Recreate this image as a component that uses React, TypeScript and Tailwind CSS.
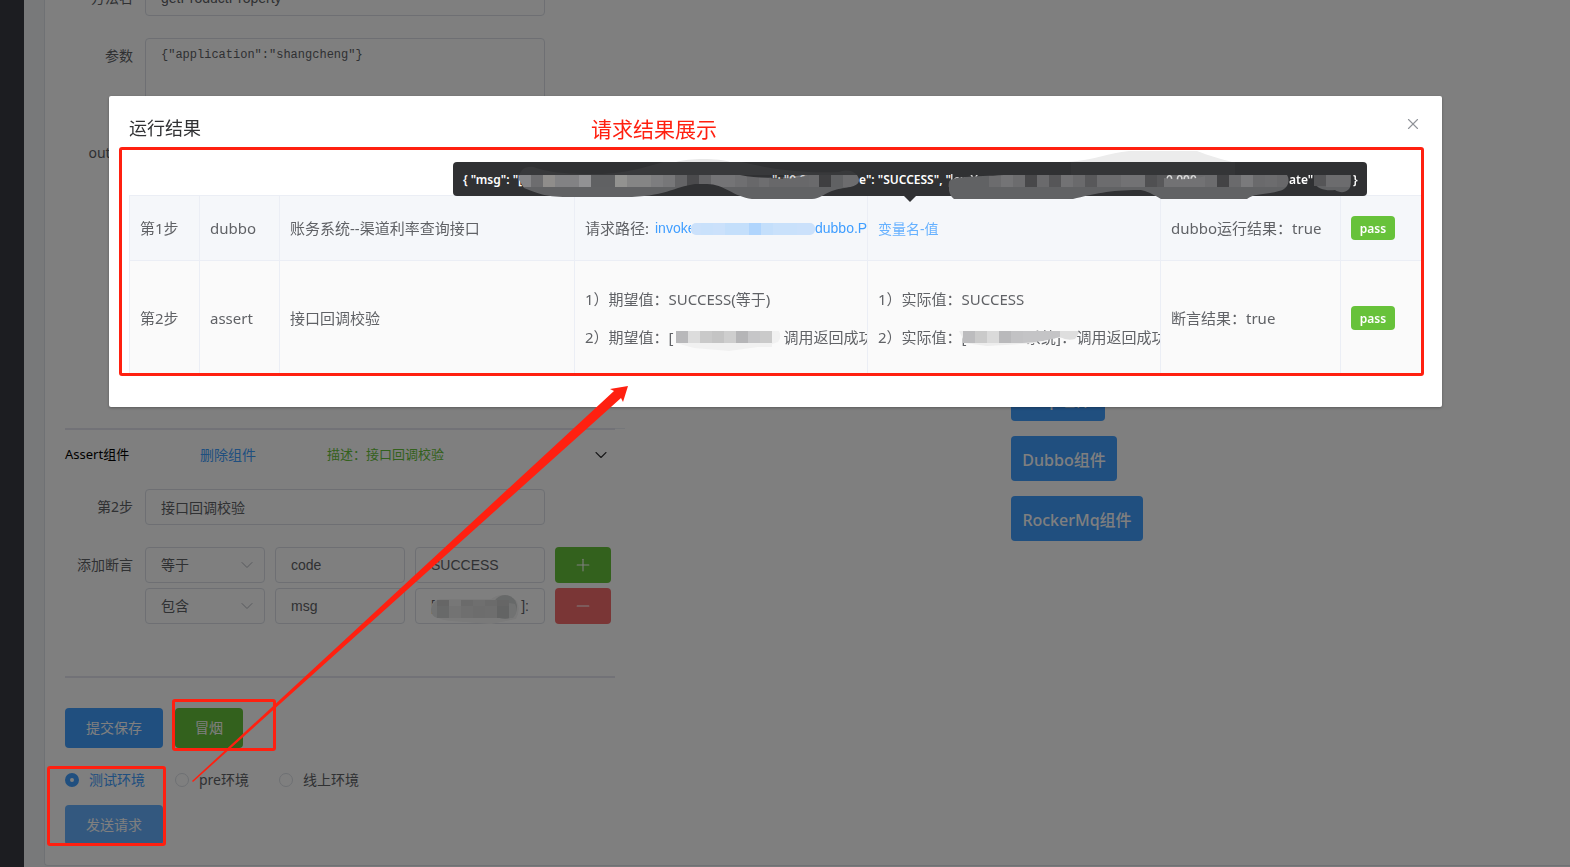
import React, { useState } from 'react';
import { ChevronDown, Minus, Plus, X } from 'lucide-react';

type Tile = string;

// Row of 12px squares that hides private values
const Mosaic: React.FC<{ tiles: Tile[]; x?: number; y?: number }> = ({ tiles, x = 0, y = 0 }) => (
  <g shapeRendering="crispEdges">
    {tiles.map((fill, i) => (
      <rect key={i} x={x + i * 12} y={y} width={12} height={12} fill={fill} />
    ))}
  </g>
);

const leftTiles = [
  '#858587', '#6d6d6f', '#8f8d8b', '#828284', '#828284', '#929294', '#606163', '#606163', '#929290', '#858585',
  '#858585', '#7d7d7f', '#777779', '#646466', '#4a4a4c', '#646466', '#747476', '#747476', '#6f6f71', '#68686a',
  '#6e6e70', '#434345', '#606163', '#777779', '#6a6a6c', '#3f3f41', '#606163', '#6c6c6e', '#6c6c6e',
];

const rightTiles = [
  '#616264', '#616264', '#616264', '#616264', '#6c6c6e', '#747476', '#6c6c6e', '#48484a', '#6a6a6c', '#565658',
  '#727274', '#6a6a6c', '#58585a', '#6c6c6e', '#6c6c6e', '#727274', '#727274', '#505052', '#58585a', '#6a6a6c',
  '#7c7c7e', '#6c6c6e', '#6c6c6e', '#434345', '#6a6a6c', '#7a7a7c', '#6a6a6c', '#6c6c6e', '#68686a',
];

const ResultTooltip = () => (
  <div
    role="tooltip"
    className="absolute left-[344px] top-[66px] z-10 flex h-[34px] w-[914px] items-center rounded bg-[#303133] pl-[10px] text-xs font-semibold text-white"
  >
    <span className="w-14 whitespace-pre pt-[2px]">{'{ "msg": "['}</span>
    <svg width="340" height="34" className="shrink-0 overflow-visible" aria-hidden="true">
      <defs>
        <clipPath id="blob-left">
          <path d="M0 18C0 8 5 4 15 5C28 10 45 12 75 12C115 12 130 2 158 -3H211C235 3 270 12 320 10C334 5 340 14 340 18C340 26 325 25 316 28C305 31 301 37 293 37H233C215 35 205 22 188 22H176C155 25 145 35 106 35H48C25 35 15 30 5 26Z" />
        </clipPath>
      </defs>
      <path d="M157 0C170 -4 200 -4 211 0Z" fill="#e8e8e8" />
      <g clipPath="url(#blob-left)">
        <rect x="0" y="0" width="340" height="14" fill="#38393b" />
        <rect x="0" y="25" width="340" height="13" fill="#616264" />
        <Mosaic tiles={leftTiles} x={0} y={13} />
      </g>
      <path d="M221 13C240 17 262 16 284 13Z" fill="#303133" />
      <text x="253" y="22" fontSize="12" fill="#d8d8d8">&quot;: &quot;0.0</text>
      <path d="M250 25V16C262 18 275 17 290 13V25Z" fill="#68686a" />
    </svg>
    <span className="w-[90px] whitespace-pre pt-[2px]">{'e": "SUCCESS", "'}</span>
    <svg width="340" height="34" className="shrink-0 overflow-visible" aria-hidden="true">
      <defs>
        <clipPath id="blob-right">
          <path d="M0 20C2 14 25 15 55 13L75 12C95 2 120 -2 178 -12H249C290 2 310 2 338 13C342 19 338 28 330 29C318 33 305 31 298 37H212C200 30 195 28 190 28C160 28 145 32 124 37H5C0 33 -1 27 0 20Z" />
        </clipPath>
      </defs>
      <path d="M119 0C145 -2 160 -9 180 -11H248C258 -7 275 -2 283 0Z" fill="#ececec" />
      <text x="1" y="22" fontSize="12" fill="#d8d8d8">lowY</text>
      <g clipPath="url(#blob-right)">
        <rect x="122" y="0" width="164" height="14" fill="#343537" />
        <rect x="0" y="25" width="340" height="13" fill="#616264" />
        <Mosaic tiles={rightTiles} x={-8} y={13} />
      </g>
      <text x="217" y="22" fontSize="12" fill="#d8d8d8">0.000</text>
      <path d="M215 25V16C230 18 243 18 256 14V25Z" fill="#727274" />
    </svg>
    <span className="w-6 whitespace-pre pt-[2px]">{'ate":'}</span>
    <svg width="40" height="34" className="shrink-0" aria-hidden="true">
      <path d="M1 13H38V20C38 31 28 32 22 28C12 29 5 27 1 21Z" fill="#616264" />
      <rect x="13" y="13" width="24" height="12" fill="#6c6c6e" />
      <rect x="1" y="13" width="12" height="11" fill="#555557" />
    </svg>
    <span className="pt-[2px]">{'}'}</span>
    <svg width="12" height="6" className="absolute left-[451px] top-[34px]" aria-hidden="true">
      <path d="M0 0H12L6 6Z" fill="#303133" />
    </svg>
  </div>
);

const PassTag = () => (
  <span className="flex h-6 w-11 items-center justify-center rounded bg-[#67c23a] pt-[2px] text-xs font-semibold leading-none text-white">
    pass
  </span>
);

const cell = 'border-b border-r border-[#ebeef5] pl-[10px] text-left font-normal whitespace-nowrap overflow-hidden';

const ResultTable = () => (
  <table className="w-full table-fixed border-separate border-spacing-0 border-l border-t border-[#ebeef5] text-[15px] leading-[22px] text-[#606266]">
    <colgroup>
      <col className="w-[70px]" />
      <col className="w-20" />
      <col className="w-[295px]" />
      <col />
      <col />
      <col className="w-[180px]" />
      <col className="w-[81px]" />
    </colgroup>
    <tbody>
      <tr className="h-[65px] bg-[#f5f7fa]">
        <td className={cell}>第1步</td>
        <td className={cell}>dubbo</td>
        <td className={cell}>账务系统--渠道利率查询接口</td>
        <td className={cell}>
          <div className="flex items-center">
            <span className="w-[70px] shrink-0">请求路径:</span>
            <a href="#path" className="flex items-center font-['Liberation_Sans'] text-sm text-[#409eff]">
              <span className="w-9 overflow-hidden">invoke</span>
              <svg width="124" height="24" className="shrink-0" aria-hidden="true">
                <rect x="0" y="7" width="124" height="12" rx="5" fill="#cbe1fb" />
                <Mosaic tiles={['#c9e1fb', '#cbe1fb', '#c4dffb', '#c4dffb', '#b0d5fd', '#c4dffb', '#c9e1fb', '#c9e1fb']} x={10} y={7} />
              </svg>
              dubbo.P
            </a>
          </div>
        </td>
        <td className={cell}>
          <a href="#vars" className="text-sm text-[#66b1ff]">变量名-值</a>
        </td>
        <td className={cell}>dubbo运行结果：true</td>
        <td className={cell}>
          <PassTag />
        </td>
      </tr>
      <tr className="h-[115px] bg-[#fafafa]">
        <td className={cell}>第2步</td>
        <td className={cell}>assert</td>
        <td className={cell}>接口回调校验</td>
        <td className={cell}>
          <p className="mb-4">1）期望值：SUCCESS(等于)</p>
          <p className="flex items-center">
            2）期望值：[
            <svg width="110" height="22" className="shrink-0 overflow-visible" aria-hidden="true">
              <path d="M2 5H105Q108 11 104 16L98 18V21H84L55 25L20 22L2 17Z" fill="#f1f1f1" />
              <Mosaic tiles={['#b8b8ba', '#dcdcdc', '#c9c9c9', '#c4c4c4', '#cecece', '#b5b5b7', '#c6c6c8', '#cacaca']} x={2} y={5} />
            </svg>
            调用返回成功
          </p>
        </td>
        <td className={cell}>
          <p className="mb-4">1）实际值：SUCCESS</p>
          <p className="flex items-center">
            2）实际值：[
            <svg width="110" height="22" className="shrink-0 overflow-visible" aria-hidden="true">
              <text x="59" y="17" fontSize="15" fill="#606266">系统]：</text>
              <path d="M-8 5H110Q112 14 104 12H70V17L20 20L-2 17Z" fill="#ededed" />
              <Mosaic tiles={['#bcbcbe', '#cacaca', '#dadada', '#b9b9bb', '#c2c2c4']} x={-4} y={5} />
              <path d="M56 5H93V11Q76 16 56 17Z" fill="#c4c4c6" />
              <path d="M93 5H113L108 13Q100 15 93 11Z" fill="#dedede" />
            </svg>
            调用返回成功
          </p>
        </td>
        <td className={cell}>断言结果：true</td>
        <td className={cell}>
          <PassTag />
        </td>
      </tr>
    </tbody>
  </table>
);

const field =
  'h-9 rounded border border-[#dcdfe6] bg-white px-[15px] text-sm text-[#606266] outline-none font-[Liberation_Sans,Noto_Sans_CJK_SC,sans-serif]';
const label = 'w-20 shrink-0 pr-3 text-right text-sm leading-9 text-[#606266] whitespace-nowrap';

const AssertRow: React.FC<{ operator: string; name: string; children: React.ReactNode; first?: boolean }> = ({
  operator,
  name,
  children,
  first,
}) => (
  <div className="flex gap-[10px]">
    <div className="relative w-[120px]">
      <select aria-label="断言方式" defaultValue={operator} className={`${field} w-full appearance-none`}>
        <option>等于</option>
        <option>包含</option>
      </select>
      <ChevronDown strokeWidth={1.2} className="pointer-events-none absolute right-2 top-2 h-5 w-5 text-[#b0b4bc]" />
    </div>
    <input aria-label="断言字段" defaultValue={name} className={`${field} w-[130px]`} />
    <div className="relative w-[130px]">{children}</div>
    <button
      type="button"
      aria-label={first ? '添加' : '删除'}
      className={`flex h-9 w-14 items-center justify-center rounded text-white ${first ? 'bg-[#67c23a]' : 'bg-[#f56c6c]'}`}
    >
      {first ? <Plus strokeWidth={1.3} className="h-5 w-5" /> : <Minus strokeWidth={1.3} className="h-5 w-5" />}
    </button>
  </div>
);

const componentButtons = [
  { name: 'Http组件', width: 'w-[94px]' },
  { name: 'Dubbo组件', width: 'w-[106px]' },
  { name: 'RockerMq组件', width: 'w-[132px]' },
];
const environments = ['测试环境', 'pre环境', '线上环境'];

export default function App() {
  const [env, setEnv] = useState('测试环境');

  return (
    <div className="relative flex h-screen overflow-hidden bg-[#f0f2f5] font-[Noto_Sans,Noto_Sans_CJK_SC,sans-serif] text-[#303133]">
      <aside className="w-6 shrink-0 bg-[#393a42]" />

      {/* Page content, scrolled down */}
      <main className="-mt-6 mb-[1px] ml-[20px] flex flex-1 items-start rounded-bl border-b border-l border-[#dfe2e8] bg-white pl-5 pt-1">
        <form className="w-[560px] shrink-0">
          <div className="mb-[22px] flex">
            <label htmlFor="method" className={label}>方法名</label>
            <input id="method" defaultValue="getProductProperty" className={`${field} w-[400px]`} />
          </div>
          <div className="mb-[22px] flex">
            <label htmlFor="params" className={label}>参数</label>
            <textarea
              id="params"
              defaultValue={'{"application":"shangcheng"}'}
              className="h-[75px] w-[400px] resize-none rounded border border-[#dcdfe6] px-[15px] py-[6px] font-['Liberation_Mono'] text-xs leading-[21px] text-[#606266]"
            />
          </div>
          <div className="mb-[22px] flex">
            <label htmlFor="output" className={label}>output</label>
            <textarea id="output" className="h-[271px] w-[400px] resize-none rounded border border-[#dcdfe6]" />
          </div>

          <div className="flex items-start">
            <hr className="w-[550px] border-t-2 border-[#e4e4ee]" />
            <hr className="flex-1 border-t border-[#ebeef5]" />
          </div>
          <div className="flex h-12 items-center pt-[2px] text-[13px]">
            <span className="w-[135px] text-black">Assert组件</span>
            <a href="#remove" className="w-[127px] text-sm text-[#409eff]">删除组件</a>
            <span className="flex-1 text-[#67c23a]">描述：接口回调校验</span>
            <ChevronDown strokeWidth={1.3} className="mr-[14px] h-5 w-5" />
          </div>

          <div className="mb-[22px] mt-[11px] flex">
            <label htmlFor="step" className={label}>第2步</label>
            <input id="step" defaultValue="接口回调校验" className={`${field} w-[400px]`} />
          </div>
          <div className="flex">
            <span className={label}>添加断言</span>
            <div className="flex flex-col gap-[5px]">
              <AssertRow operator="等于" name="code" first>
                <input aria-label="断言值" defaultValue="SUCCESS" className={`${field} w-full`} />
              </AssertRow>
              <AssertRow operator="包含" name="msg">
                <div className={`${field} flex items-center justify-between`}>
                  <span>[</span>
                  <span>]:</span>
                </div>
                <svg width="90" height="36" className="absolute left-4 top-0 overflow-visible" aria-hidden="true">
                  <path d="M0 19Q2 11 10 11H60Q72 2 86 13Q90 22 85 31L60 36L20 33Q2 32 0 19Z" fill="#f4f4f4" />
                  <circle cx="74" cy="19" r="12" fill="#cfd2d2" />
                  <path d="M0 21Q2 12 10 12H60L84 16Q88 24 82 30H6Q0 28 0 21Z" fill="#e2e4e4" />
                  <Mosaic tiles={['#cdcdcd', '#eeeeee', '#d6d6d6', '#dedede', '#d6d6d6', '#cccccc']} x={6} y={12} />
                  <Mosaic tiles={['#d0d2d2', '#e6e6e6', '#dedede', '#dadada', '#dcdcdc', '#c6c8c8']} x={6} y={18} />
                </svg>
              </AssertRow>
            </div>
          </div>

          <hr className="mt-[52px] w-[550px] border-t-2 border-[#e4e4ee]" />
          <div className="mt-[30px] flex gap-3 text-sm text-white">
            <button type="button" className="h-10 w-[98px] rounded bg-[#409eff]">提交保存</button>
            <button type="button" className="h-10 w-[68px] rounded bg-[#67c23a]">冒烟</button>
          </div>
          <div className="mb-[18px] mt-[25px] flex h-[14px] items-center gap-[30px] text-sm leading-none text-[#606266]">
            {environments.map((name) => (
              <label key={name} className="flex items-center gap-[10px] has-[:checked]:text-[#409eff]">
                <input
                  type="radio"
                  name="env"
                  checked={env === name}
                  onChange={() => setEnv(name)}
                  className="h-[14px] w-[14px] appearance-none rounded-full border border-[#dcdfe6] bg-white checked:border-[5px] checked:border-[#409eff]"
                />
                {name}
              </label>
            ))}
          </div>
          <button type="button" className="mb-5 h-10 w-[98px] rounded bg-[#66b1ff] text-sm text-white">发送请求</button>
        </form>

        <div className="ml-[386px] mt-[396px] flex flex-col items-start gap-[15px]">
          {componentButtons.map(({ name, width }) => (
            <button
              key={name}
              type="button"
              className={`${width} h-[45px] whitespace-nowrap rounded bg-[#409eff] pt-[2px] text-base font-medium text-white`}
            >
              {name}
            </button>
          ))}
        </div>
      </main>

      {/* Result dialog */}
      <div className="fixed inset-0 bg-black/50 pl-[109px] pr-32 pt-24">
        <section role="dialog" aria-label="运行结果" className="relative rounded-[2px] bg-white px-5 pb-[31px] pt-5 shadow-[0_1px_3px_rgba(0,0,0,0.3)]">
          <header className="mb-[55px] flex h-6 items-center justify-between">
            <h2 className="text-lg leading-6 text-[#303133]">运行结果</h2>
            <button type="button" aria-label="关闭" className="mb-2 text-[#909399]">
              <X strokeWidth={1.5} className="h-[18px] w-[18px]" />
            </button>
          </header>
          <ResultTable />
          <ResultTooltip />
        </section>
      </div>

      {/* Annotations */}
      <div className="pointer-events-none fixed inset-0">
        <p className="absolute left-[591px] top-[114px] text-[21px] leading-[30px] text-[#ff2010]">请求结果展示</p>
        <div className="absolute left-[119px] right-[146px] top-[147px] h-[229px] rounded-[3px] border-3 border-[#ff2010]" />
        <div className="absolute left-[172px] top-[699px] h-[52px] w-[104px] rounded-[3px] border-3 border-[#ff2010]" />
        <div className="absolute left-[47px] top-[766px] h-20 w-[119px] rounded-[3px] border-3 border-[#ff2010]" />
        <svg className="absolute left-0 top-0 h-full w-full" aria-hidden="true">
          <path d="M192 781L614 391L610 389L628 386L623 402L621 398L193 782Z" fill="#ff2010" />
        </svg>
      </div>
    </div>
  );
}
